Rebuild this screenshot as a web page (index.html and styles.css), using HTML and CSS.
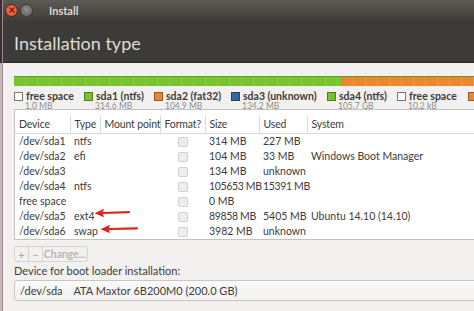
FILE: index.html
```html
<!DOCTYPE html>
<html>
<head>
<meta charset="utf-8">
<link rel="stylesheet" href="styles.css">
</head>
<body>
<div class="desk"></div>
<div class="window">
  <div class="titlebar">
    <span class="btn close"><svg width="8" height="8" viewBox="0 0 8 8"><path d="M1.5 1.5L6.5 6.5M6.5 1.5L1.5 6.5" stroke="#6b1d10" stroke-width="1.4"/></svg></span>
    <span class="btn mini"></span>
    <span class="title">Install</span>
  </div>
  <div class="header">Installation type</div>
  <div class="content">
    <div class="bar">
      <div class="seg green" style="width:328px"></div>
      <div class="seg orange" style="width:200px"></div>
    </div>
    <div class="legend">
      <div class="item" style="width:70px"><div class="lab"><span class="sq empty"></span>free space</div><div class="sz">1.0 MB</div></div>
      <div class="item" style="width:70px"><div class="lab"><span class="sq green"></span>sda1 (ntfs)</div><div class="sz">314.6 MB</div></div>
      <div class="item" style="width:77px"><div class="lab"><span class="sq orange"></span>sda2 (fat32)</div><div class="sz">104.9 MB</div></div>
      <div class="item" style="width:96px"><div class="lab"><span class="sq blue"></span>sda3 (unknown)</div><div class="sz">134.2 MB</div></div>
      <div class="item" style="width:70px"><div class="lab"><span class="sq green"></span>sda4 (ntfs)</div><div class="sz">105.7 GB</div></div>
      <div class="item" style="width:71px"><div class="lab"><span class="sq empty"></span>free space</div><div class="sz">10.2 kB</div></div>
      <div class="item" style="width:20px"><div class="lab"><span class="sq orange"></span></div></div>
    </div>
    <div class="tablebox">
      <table class="parts">
        <colgroup>
          <col style="width:55px"><col style="width:30px"><col style="width:60px"><col style="width:45px"><col style="width:54px"><col style="width:48px"><col>
        </colgroup>
        <thead>
          <tr><th>Device</th><th>Type</th><th>Mount point</th><th>Format?</th><th>Size</th><th>Used</th><th>System</th></tr>
        </thead>
        <tbody>
          <tr><td>/dev/sda1</td><td>ntfs</td><td></td><td class="c"><span class="cb"></span></td><td>314 MB</td><td>227 MB</td><td></td></tr>
          <tr><td>/dev/sda2</td><td>efi</td><td></td><td class="c"><span class="cb"></span></td><td>104 MB</td><td>33 MB</td><td>Windows Boot Manager</td></tr>
          <tr><td>/dev/sda3</td><td></td><td></td><td class="c"><span class="cb"></span></td><td>134 MB</td><td>unknown</td><td></td></tr>
          <tr><td>/dev/sda4</td><td>ntfs</td><td></td><td class="c"><span class="cb"></span></td><td class="num">105653 MB</td><td class="num">15391 MB</td><td></td></tr>
          <tr><td>free space</td><td></td><td></td><td class="c"><span class="cb"></span></td><td>0 MB</td><td></td><td></td></tr>
          <tr><td>/dev/sda5</td><td>ext4</td><td></td><td class="c"><span class="cb"></span></td><td class="num">89858 MB</td><td>5405 MB</td><td>Ubuntu 14.10 (14.10)</td></tr>
          <tr><td>/dev/sda6</td><td>swap</td><td></td><td class="c"><span class="cb"></span></td><td>3982 MB</td><td>unknown</td><td></td></tr>
        </tbody>
      </table>
      <svg class="arrow a1" width="36" height="10" viewBox="0 0 36 10"><path d="M35 4.2L9 5" stroke="#e3231b" stroke-width="2.2" stroke-linecap="round"/><path d="M0.5 5.3L10 0.8L8.5 5.1L10 9.3Z" fill="#e3231b"/></svg>
      <svg class="arrow a2" width="38" height="10" viewBox="0 0 38 10"><path d="M37 4.3L9 5" stroke="#e3231b" stroke-width="2.2" stroke-linecap="round"/><path d="M0.5 5.3L10 0.8L8.5 5.1L10 9.3Z" fill="#e3231b"/></svg>
    </div>
    <div class="tools">
      <span class="tb">+</span><span class="tb">−</span><span class="tb wide">Change...</span>
    </div>
    <div class="bootlabel">Device for boot loader installation:</div>
    <div class="combo">/dev/sda&nbsp;&nbsp;&nbsp;&nbsp;ATA Maxtor 6B200M0 (200.0 GB)</div>
  </div>
</div>
</body>
</html>
```
FILE: styles.css
```css
* { box-sizing: border-box; }
html, body { margin: 0; padding: 0; }
body {
  width: 474px; height: 311px; overflow: hidden;
  display: flex;
  background: #c6b6bc;
  font-family: Lato, "Open Sans", sans-serif;
}
.desk {
  width: 3px; flex: none;
  background: linear-gradient(#3a2c33 0, #3a2c33 63px, #c7b5bc 63px);
  border-right: 1px solid #9a8c90;
}
.window {
  flex: 1; min-width: 0;
  display: flex; flex-direction: column;
  background: #f2f1f0;
  overflow: hidden;
}
.titlebar {
  height: 20px; flex: none;
  background: linear-gradient(#5d5a54, #3f3e3a);
  display: flex; align-items: center;
  padding-left: 2px;
}
.btn {
  width: 13px; height: 13px; border-radius: 50%;
  display: flex; align-items: center; justify-content: center;
  margin-right: 2px;
}
.close { background: radial-gradient(circle at 50% 40%, #f47a55, #df4a1f); border: 1px solid #4a2a20; }
.mini { background: radial-gradient(circle at 50% 40%, #8f8c86, #65625d); border: 1px solid #3a3834; }
.title {
  margin-left: 14px; color: #dcd9d2; font-weight: bold; font-size: 11px;
}
.header {
  height: 43px; flex: none;
  background: #3c3b37;
  color: #dfdcd6;
  font-size: 18px;
  padding: 12px 0 0 11px;
  border-bottom: 1px solid #2c2b28;
}
.content {
  padding: 12px 0 0 11px;
  width: 600px;
}
.bar {
  display: flex; height: 10px; margin-top: 1px;
  border-top: 1px solid #5c9e22;
}
.seg {
  height: 100%;
  background-image: repeating-linear-gradient(90deg, transparent 0, transparent 11px, rgba(255,255,255,0.18) 11px, rgba(255,255,255,0.18) 12px);
}
.seg.green { background-color: #78c232; }
.seg.orange { background-color: #ea8630; }
.legend {
  display: flex; margin-top: 4px; height: 20px;
}
.item { flex: none; }
.lab {
  font-size: 10.5px; font-weight: bold; color: #3c3c3c;
  display: flex; align-items: center; white-space: nowrap; height: 12px;
}
.sq {
  width: 9px; height: 9px; margin-right: 3px; flex: none;
  border: 1px solid rgba(0,0,0,0.35);
}
.sq.empty { background: #fff; border-color: #777; }
.sq.green { background: #78c232; }
.sq.orange { background: #ea8630; }
.sq.blue { background: #3465a4; }
.sz {
  font-size: 8.5px; color: #8d8d8d; padding-left: 11px; line-height: 9px;
}
.tablebox {
  position: relative;
  margin-top: -1px;
  border: 1px solid #c4c2bf;
  background: #fff;
  height: 131px;
  padding-top: 5px;
}
.parts {
  border-collapse: collapse; table-layout: fixed; width: 588px;
  font-size: 10.5px; color: #3c3c3c;
}
.parts th {
  font-weight: normal; text-align: left; height: 18px;
  padding: 0 3px 0 4px; border-right: 1px solid #dcdad6; border-bottom: 1px solid #dcdad6;
  white-space: nowrap; letter-spacing: -0.15px;
}
.parts th:last-child { border-right: none; }
.parts td {
  height: 15px; padding: 0 2px 0 4px; white-space: nowrap;
}
.parts td.num { letter-spacing: -0.35px; }
.parts td.c { text-align: center; padding: 0; }
.cb {
  display: inline-block; width: 10px; height: 10px; vertical-align: middle;
  border: 1px solid #d3d1ce; border-radius: 2px; background: #eeedeb;
}
.arrow { position: absolute; }
.a1 { left: 79px; top: 98px; }
.a2 { left: 85px; top: 114px; }
.tools {
  display: flex; margin-top: 6px; height: 16px;
}
.tb {
  display: flex; align-items: center; justify-content: center;
  width: 15px; height: 16px; font-size: 11px; color: #a8a6a3;
  border: 1px solid #d6d4d0; margin-right: -1px;
}
.tb:first-child { border-radius: 2px 0 0 2px; }
.tb.wide { width: 46px; border-radius: 0 2px 2px 0; font-size: 10.5px; }
.bootlabel {
  font-size: 11px; color: #3c3c3c; margin-top: 2px; height: 15px;
}
.combo {
  margin-top: 1px; height: 21px;
  border: 1px solid #c9c7c3; border-radius: 3px 0 0 3px;
  background: linear-gradient(#fbfafa, #f3f2f1);
  font-size: 11px; color: #3c3c3c;
  padding: 3px 0 0 5px;
}
```
